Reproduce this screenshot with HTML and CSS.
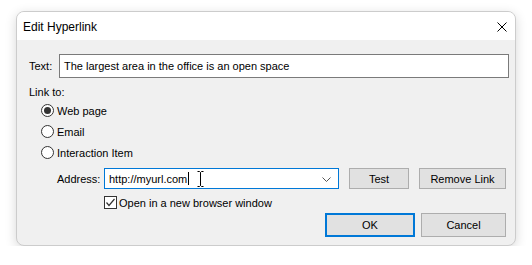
FILE: index.html
```html
<!DOCTYPE html>
<html>
<head>
<meta charset="utf-8">
<link rel="stylesheet" href="styles.css">
</head>
<body>
<div class="dialog">
  <div class="titlebar">
    <span class="title">Edit Hyperlink</span>
    <svg class="close" width="10" height="10" viewBox="0 0 10 10"><path d="M0.5 0.5 L9.5 9.5 M9.5 0.5 L0.5 9.5" stroke="#000" stroke-width="1" fill="none"/></svg>
  </div>
  <div class="content">
    <div class="text-row">
      <span class="text-label">Text:</span>
      <div class="field text-field">The largest area in the office is an open space</div>
    </div>
    <div class="linkto">Link to:</div>
    <div class="radios">
      <div class="radio-row"><span class="radio checked"></span><span>Web page</span></div>
      <div class="radio-row"><span class="radio"></span><span>Email</span></div>
      <div class="radio-row"><span class="radio"></span><span>Interaction Item</span></div>
    </div>
    <div class="address-row">
      <span class="address-label">Address:</span>
      <div class="field combo">
        <span class="value">http://myurl.com</span><span class="caret"></span>
        <svg class="chevron" width="9" height="5" viewBox="0 0 9 5"><path d="M0.5 0.5 L4.5 4.5 L8.5 0.5" stroke="#555" stroke-width="1" fill="none"/></svg>
        <svg class="ibeam" width="7" height="16" viewBox="0 0 7 16"><path d="M0.5 0.5 H2.5 L3.5 1.5 L4.5 0.5 H6.5 M3.5 1.5 V14.5 M0.5 15.5 H2.5 L3.5 14.5 L4.5 15.5 H6.5" stroke="#000" stroke-width="1" fill="none"/></svg>
      </div>
      <button class="btn test">Test</button>
      <button class="btn remove">Remove Link</button>
    </div>
    <div class="check-row">
      <span class="checkbox"><svg width="11" height="11" viewBox="0 0 11 11"><path d="M1.5 5.5 L4 8.5 L9.5 2" stroke="#333" stroke-width="1.2" fill="none"/></svg></span>
      <span>Open in a new browser window</span>
    </div>
    <div class="actions">
      <button class="btn ok">OK</button>
      <button class="btn cancel">Cancel</button>
    </div>
  </div>
</div>
</body>
</html>
```

FILE: styles.css
```css
html, body {
  margin: 0;
  padding: 0;
  background: #ffffff;
}
body {
  font-family: "Liberation Sans", Arial, sans-serif;
  font-size: 11px;
  color: #000;
  padding: 11px 0 0 16px;
}
.dialog {
  width: 500px;
  height: 235px;
  box-sizing: border-box;
  border: 1px solid #cccccc;
  border-radius: 8px;
  overflow: hidden;
  background: #f0f0f0;
  box-shadow: 0 3px 12px rgba(0,0,0,0.16);
  display: flex;
  flex-direction: column;
}
.titlebar {
  height: 28px;
  background: #ffffff;
  display: flex;
  align-items: center;
  justify-content: space-between;
  padding: 0 8px 0 6px;
  flex: none;
}
.title {
  font-size: 12px;
  padding-top: 1px;
}
.close {
  display: block;
  margin-top: 1px;
}
.content {
  padding: 14px 6px 0 12px;
  display: flex;
  flex-direction: column;
}
.text-row {
  display: flex;
  align-items: center;
  height: 24px;
}
.text-label {
  width: 30px;
  flex: none;
}
.field {
  box-sizing: border-box;
  background: #fff;
  border: 1px solid #7a7a7a;
  padding: 0 4px;
  display: flex;
  align-items: center;
}
.text-field {
  flex: 1;
  height: 24px;
}
.linkto {
  margin-top: 6px;
  height: 16px;
  line-height: 16px;
}
.radios {
  padding-left: 12px;
  display: flex;
  flex-direction: column;
}
.radio-row {
  height: 21px;
  display: flex;
  align-items: center;
  gap: 3px;
}
.radio {
  width: 13px;
  height: 13px;
  box-sizing: border-box;
  border: 1px solid #333;
  border-radius: 50%;
  background: #fff;
  display: flex;
  align-items: center;
  justify-content: center;
}
.radio.checked::after {
  content: "";
  width: 7px;
  height: 7px;
  border-radius: 50%;
  background: #333;
}
.address-row {
  margin-top: 5px;
  height: 21px;
  display: flex;
  align-items: center;
  padding-left: 28px;
}
.address-label {
  width: 47px;
  flex: none;
}
.combo {
  width: 235px;
  height: 21px;
  border-color: #0078d7;
  position: relative;
}
.caret {
  width: 1px;
  height: 13px;
  background: #000;
  margin-left: 1px;
}
.chevron {
  position: absolute;
  right: 7px;
  top: 8px;
}
.ibeam {
  position: absolute;
  left: 92px;
  top: 2px;
}
.btn {
  font-family: inherit;
  font-size: 11px;
  color: #000;
  background: #e1e1e1;
  border: 1px solid #adadad;
  box-sizing: border-box;
  padding: 0;
  margin: 0;
}
.test {
  width: 60px;
  height: 21px;
  margin-left: 10px;
}
.remove {
  width: 87px;
  height: 21px;
  margin-left: 10px;
}
.check-row {
  margin-top: 5px;
  height: 17px;
  display: flex;
  align-items: center;
  gap: 2px;
  padding-left: 75px;
}
.checkbox {
  width: 13px;
  height: 13px;
  box-sizing: border-box;
  border: 1px solid #333;
  background: #fff;
  display: flex;
  align-items: center;
  justify-content: center;
}
.checkbox svg {
  display: block;
}
.actions {
  margin-top: 2px;
  display: flex;
  justify-content: flex-end;
  gap: 6px;
  padding-right: 3px;
}
.ok {
  width: 90px;
  height: 24px;
  border: 2px solid #0078d7;
}
.cancel {
  width: 85px;
  height: 24px;
}
```
